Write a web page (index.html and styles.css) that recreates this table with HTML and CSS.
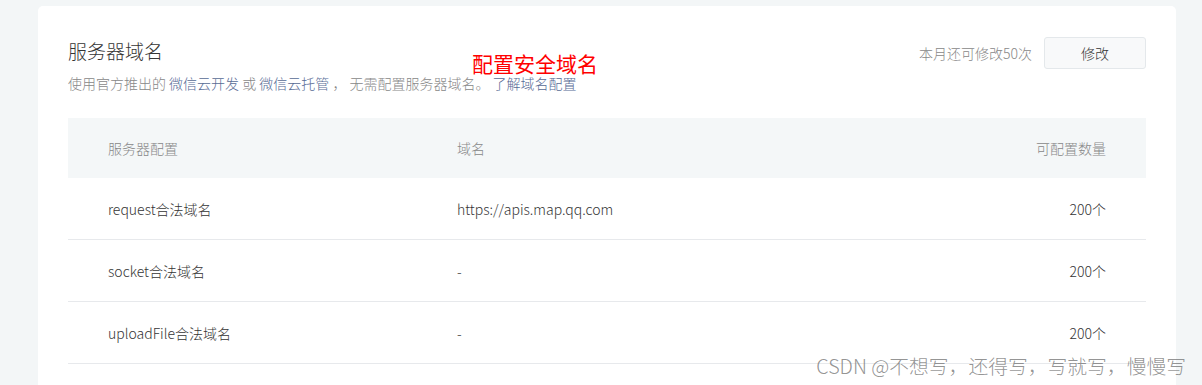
FILE: index.html
```html
<!DOCTYPE html>
<html lang="zh-CN">
<head>
<meta charset="utf-8">
<title>服务器域名</title>
<link rel="stylesheet" href="styles.css">
</head>
<body>
<div class="card">
  <div class="head">
    <div class="head-left">
      <h2 class="title">服务器域名</h2>
      <p class="desc">使用官方推出的 <a class="link">微信云开发</a> 或 <a class="link">微信云托管</a> ， 无需配置服务器域名。 <a class="link">了解域名配置</a></p>
    </div>
    <div class="head-right">
      <span class="quota">本月还可修改50次</span>
      <button class="btn">修改</button>
    </div>
    <span class="note">配置安全域名</span>
  </div>
  <div class="table">
    <div class="row thead">
      <div class="c1">服务器配置</div>
      <div class="c2">域名</div>
      <div class="c3">可配置数量</div>
    </div>
    <div class="row">
      <div class="c1">request合法域名</div>
      <div class="c2">https://apis.map.qq.com</div>
      <div class="c3">200个</div>
    </div>
    <div class="row">
      <div class="c1">socket合法域名</div>
      <div class="c2">-</div>
      <div class="c3">200个</div>
    </div>
    <div class="row">
      <div class="c1">uploadFile合法域名</div>
      <div class="c2">-</div>
      <div class="c3">200个</div>
    </div>
  </div>
</div>
<div class="watermark">CSDN @不想写，还得写，写就写，慢慢写</div>
</body>
</html>
```

FILE: styles.css
```css
html, body {
  margin: 0;
  padding: 0;
}
body {
  background: #f3f6f7;
  font-family: "Noto Sans CJK SC", "Noto Sans", sans-serif;
  font-weight: 300;
  color: #353535;
  height: 385px;
  overflow: hidden;
  position: relative;
}
.card {
  margin: 6px 0 0 38px;
  width: 1078px;
  padding: 31px 30px 40px;
  background: #fff;
  border-radius: 5px;
}
.head {
  position: relative;
  display: flex;
  justify-content: space-between;
  align-items: flex-start;
}
.title {
  margin: 0;
  font-size: 19px;
  font-weight: 300;
  line-height: 28px;
  color: #353535;
}
.desc {
  margin: 8px 0 0;
  font-size: 14px;
  line-height: 20px;
  color: #888;
}
.link {
  color: #576b95;
  text-decoration: none;
}
.head-right {
  display: flex;
  align-items: center;
  gap: 12px;
}
.quota {
  font-size: 14px;
  color: #888;
}
.btn {
  width: 102px;
  height: 32px;
  border: 1px solid #e4e8eb;
  border-radius: 3px;
  background: #f8f9fa;
  font-family: inherit;
  font-weight: 300;
  font-size: 14px;
  color: #353535;
  padding: 0;
}
.note {
  position: absolute;
  left: 404px;
  top: 17px;
  font-size: 21px;
  line-height: 18px;
  font-weight: 400;
  color: #ff0000;
}
.table {
  margin-top: 25px;
}
.row {
  display: grid;
  grid-template-columns: 349px 1fr auto;
  align-items: center;
  height: 61px;
  padding: 0 40px;
  border-bottom: 1px solid #e7e9ec;
  font-size: 14px;
}
.thead {
  height: 60px;
  background: #f4f7f8;
  border-bottom: none;
  color: #888;
}
.c3 {
  text-align: right;
}
.watermark {
  position: absolute;
  right: 16px;
  top: 354px;
  font-size: 19.8px;
  line-height: 24px;
  color: rgba(120, 120, 120, 0.8);
}
```
